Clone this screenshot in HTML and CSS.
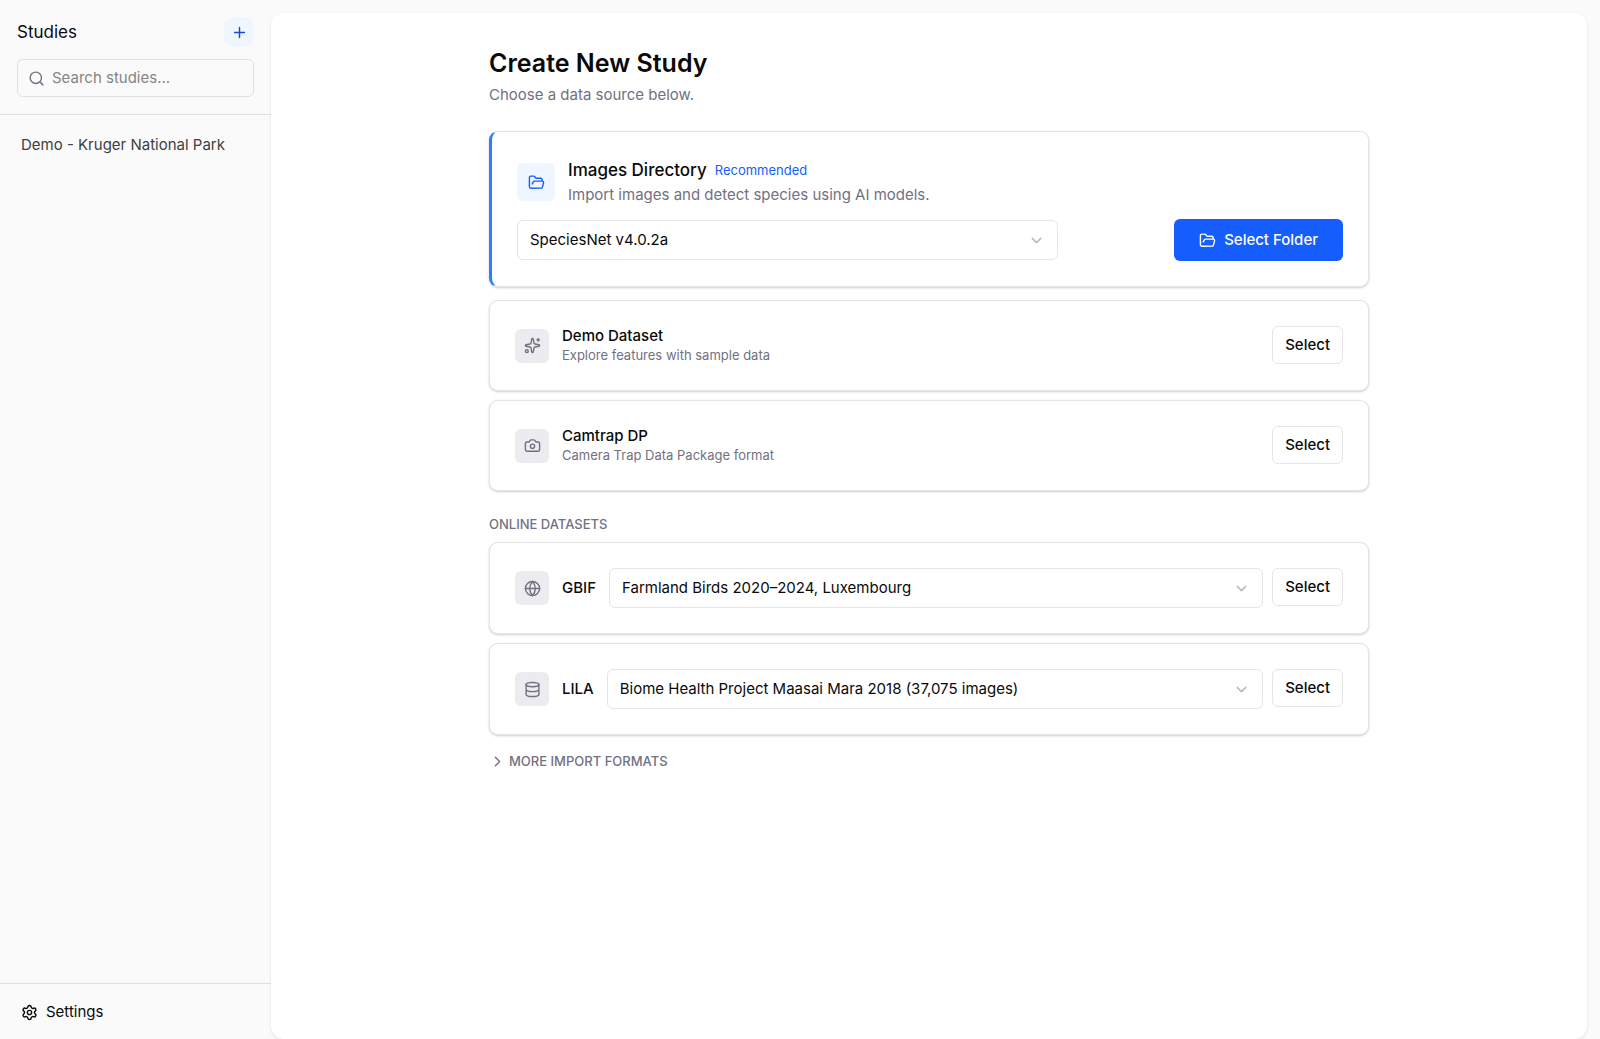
FILE: index.html
```html
<!DOCTYPE html>
<html lang="en">
<head>
    <meta charset="utf-8">
    <title>Create New Study</title>
    <link rel="stylesheet" href="styles.css">
</head>
<body>
    <!-- Shared icons -->
    <svg class="sprite" aria-hidden="true">
        <symbol id="folder-open" viewBox="0 0 24 24">
            <path d="m6 14 1.5-2.9A2 2 0 0 1 9.24 10H20a2 2 0 0 1 1.94 2.5l-1.54 6a2 2 0 0 1-1.95 1.5H4a2 2 0 0 1-2-2V5a2 2 0 0 1 2-2h3.9a2 2 0 0 1 1.69.9l.81 1.2a2 2 0 0 0 1.67.9H18a2 2 0 0 1 2 2v2"/>
        </symbol>
        <symbol id="chevron-down" viewBox="0 0 24 24">
            <path d="m6 9 6 6 6-6"/>
        </symbol>
    </svg>

    <aside class="sidebar">
        <header class="sidebar-header">
            <div class="sidebar-title">
                <a href="#">Studies</a>
                <button class="add-button" aria-label="Add study">
                    <svg class="icon" viewBox="0 0 24 24"><path d="M5 12h14M12 5v14"/></svg>
                </button>
            </div>
            <div class="search">
                <svg class="icon" viewBox="0 0 24 24"><circle cx="11" cy="11" r="8"/><path d="m21 21-4.3-4.3"/></svg>
                <input type="text" placeholder="Search studies..." aria-label="Search studies">
            </div>
        </header>
        <nav class="study-list">
            <a href="#">Demo - Kruger National Park</a>
        </nav>
        <footer class="sidebar-footer">
            <a href="#">
                <svg class="icon" viewBox="0 0 24 24"><path d="M9.671 4.136a2.34 2.34 0 0 1 4.659 0 2.34 2.34 0 0 0 3.319 1.915 2.34 2.34 0 0 1 2.33 4.033 2.34 2.34 0 0 0 0 3.831 2.34 2.34 0 0 1-2.33 4.033 2.34 2.34 0 0 0-3.319 1.915 2.34 2.34 0 0 1-4.659 0 2.34 2.34 0 0 0-3.32-1.915 2.34 2.34 0 0 1-2.33-4.033 2.34 2.34 0 0 0 0-3.831A2.34 2.34 0 0 1 6.35 6.051a2.34 2.34 0 0 0 3.319-1.915"/><circle cx="12" cy="12" r="3"/></svg>
                Settings
            </a>
        </footer>
    </aside>

    <main class="panel">
        <div class="content">
            <h1>Create New Study</h1>
            <p class="subtitle">Choose a data source below.</p>

            <section class="card card-featured">
                <div class="card-head">
                    <span class="icon-box"><svg class="icon"><use href="#folder-open"/></svg></span>
                    <div>
                        <div class="card-title">
                            <h2>Images Directory</h2>
                            <span class="badge">Recommended</span>
                        </div>
                        <p>Import images and detect species using AI models.</p>
                    </div>
                </div>
                <div class="card-actions">
                    <div class="select">
                        <select aria-label="Model">
                            <option>SpeciesNet v4.0.2a</option>
                        </select>
                        <svg class="icon"><use href="#chevron-down"/></svg>
                    </div>
                    <button class="primary-button">
                        <svg class="icon"><use href="#folder-open"/></svg>
                        Select Folder
                    </button>
                </div>
            </section>

            <div class="card-list">
                <section class="card source">
                    <div class="source-info">
                        <span class="icon-box"><svg class="icon" viewBox="0 0 24 24"><path d="M11.017 2.814a1 1 0 0 1 1.966 0l1.051 5.558a2 2 0 0 0 1.594 1.594l5.558 1.051a1 1 0 0 1 0 1.966l-5.558 1.051a2 2 0 0 0-1.594 1.594l-1.051 5.558a1 1 0 0 1-1.966 0l-1.051-5.558a2 2 0 0 0-1.594-1.594l-5.558-1.051a1 1 0 0 1 0-1.966l5.558-1.051a2 2 0 0 0 1.594-1.594z"/><path d="M20 2v4M22 4h-4"/><circle cx="4" cy="20" r="2"/></svg></span>
                        <div>
                            <h3>Demo Dataset</h3>
                            <p>Explore features with sample data</p>
                        </div>
                    </div>
                    <button class="outline-button">Select</button>
                </section>
                <section class="card source">
                    <div class="source-info">
                        <span class="icon-box"><svg class="icon" viewBox="0 0 24 24"><path d="M14.5 4h-5L7 7H4a2 2 0 0 0-2 2v9a2 2 0 0 0 2 2h16a2 2 0 0 0 2-2V9a2 2 0 0 0-2-2h-3z"/><circle cx="12" cy="13" r="3"/></svg></span>
                        <div>
                            <h3>Camtrap DP</h3>
                            <p>Camera Trap Data Package format</p>
                        </div>
                    </div>
                    <button class="outline-button">Select</button>
                </section>
            </div>

            <h4 class="group-label">Online Datasets</h4>
            <div class="card-list">
                <section class="card source">
                    <div class="source-info">
                        <span class="icon-box"><svg class="icon" viewBox="0 0 24 24"><circle cx="12" cy="12" r="10"/><path d="M12 2a14.5 14.5 0 0 0 0 20 14.5 14.5 0 0 0 0-20M2 12h20"/></svg></span>
                        <label for="gbif">GBIF</label>
                        <div class="select">
                            <select id="gbif">
                                <option>Farmland Birds 2020–2024, Luxembourg</option>
                            </select>
                            <svg class="icon"><use href="#chevron-down"/></svg>
                        </div>
                    </div>
                    <button class="outline-button">Select</button>
                </section>
                <section class="card source">
                    <div class="source-info">
                        <span class="icon-box"><svg class="icon" viewBox="0 0 24 24"><ellipse cx="12" cy="5" rx="9" ry="3"/><path d="M3 5v14a9 3 0 0 0 18 0V5M3 12a9 3 0 0 0 18 0"/></svg></span>
                        <label for="lila">LILA</label>
                        <div class="select">
                            <select id="lila">
                                <option>Biome Health Project Maasai Mara 2018 (37,075 images)</option>
                            </select>
                            <svg class="icon"><use href="#chevron-down"/></svg>
                        </div>
                    </div>
                    <button class="outline-button">Select</button>
                </section>
            </div>

            <button class="more-button">
                <svg class="icon" viewBox="0 0 24 24"><path d="m9 18 6-6-6-6"/></svg>
                More import formats
            </button>
        </div>
    </main>
</body>
</html>
```

FILE: styles.css
```css
* {
    box-sizing: border-box;
}
body {
    display: flex;
    min-height: 100vh;
    margin: 0;
    background: #fafafa;
    color: #0a0a0a;
    font-family: Inter, sans-serif;
    font-size: 15px;
    line-height: 20px;
}
h1, h2, h3, h4, p {
    margin: 0;
}
a {
    color: inherit;
    text-decoration: none;
}
button, input, select {
    font: inherit;
    color: inherit;
}
button {
    cursor: pointer;
}
.sprite {
    position: absolute;
    width: 0;
    height: 0;
}
.icon {
    width: 17px;
    height: 17px;
    flex-shrink: 0;
    fill: none;
    stroke: currentColor;
    stroke-width: 2;
    stroke-linecap: round;
    stroke-linejoin: round;
}

/* Sidebar */
.sidebar {
    display: flex;
    flex-direction: column;
    flex: 0 0 271px;
    min-width: 0;
}
.sidebar-header {
    display: flex;
    flex-direction: column;
    gap: 12px;
    padding: 17px;
    border-bottom: 1px solid #e0e0e0;
}
.sidebar-title {
    display: flex;
    align-items: center;
    justify-content: space-between;
    font-size: 17px;
}
.add-button {
    display: flex;
    align-items: center;
    justify-content: center;
    width: 30px;
    height: 30px;
    padding: 0;
    border: none;
    border-radius: 10px;
    background: #eff6ff;
    color: #1447e6;
}
.search {
    display: flex;
    align-items: center;
    gap: 7px;
    height: 38px;
    padding: 0 10px;
    border: 1px solid #e0e0e0;
    border-radius: 6px;
    color: #717182;
}
.search input {
    flex: 1;
    min-width: 0;
    padding: 0;
    border: none;
    outline: none;
    background: none;
    color: #0a0a0a;
}
.search input::placeholder {
    color: #858585;
}
.study-list {
    flex: 1;
    padding: 20px 21px;
    color: #404040;
}
.sidebar-footer {
    padding: 18px 21px 17px;
    border-top: 1px solid #e0e0e0;
}
.sidebar-footer a {
    display: flex;
    align-items: center;
    gap: 8px;
}

/* Main panel */
.panel {
    flex: 1;
    margin: 13px 13px 0 0;
    padding: 34px;
    border-radius: 13px;
    background: #fff;
    box-shadow: 0 1px 3px rgba(0, 0, 0, 0.1);
}
.content {
    max-width: 880px;
    margin: auto;
}
h1 {
    font-size: 25px;
    line-height: 32px;
    font-weight: 600;
}
.subtitle {
    margin: 6px 0 26px;
    color: #717182;
}
.card {
    padding: 25px;
    border: 1px solid #e5e5e5;
    border-radius: 9px;
    background: #fff;
    box-shadow: 0 1px 3px rgba(0, 0, 0, 0.1), 0 1px 2px rgba(0, 0, 0, 0.1);
}
.card-featured {
    margin-bottom: 13px;
    border-left: 3px solid #2b7fff;
}
.card-head {
    display: flex;
    align-items: center;
    gap: 13px;
    margin-bottom: 12px;
}
.card-head p {
    line-height: 24px;
    color: #717182;
}
.card-title {
    display: flex;
    align-items: center;
    gap: 8px;
}
.card-title h2 {
    font-size: 17px;
    line-height: 26px;
    font-weight: 500;
}
.badge {
    font-size: 13px;
    color: #155dfc;
}
.icon-box {
    display: flex;
    align-items: center;
    justify-content: center;
    flex-shrink: 0;
    width: 34px;
    height: 34px;
    border-radius: 6px;
    background: #ececf0;
    color: #717182;
}
.card-head .icon-box {
    width: 38px;
    height: 38px;
    background: #eff6ff;
    color: #155dfc;
}
.card-actions {
    display: flex;
    align-items: center;
    justify-content: space-between;
    gap: 12px;
}
.card-actions .select {
    max-width: 541px;
}
.select {
    position: relative;
    flex: 1;
    min-width: 0;
}
.select select {
    display: block;
    width: 100%;
    height: 40px;
    padding: 0 40px 0 12px;
    border: 1px solid #e5e5e5;
    border-radius: 6px;
    background: #fff;
    appearance: none;
}
/* Chevron drawn over the select */
.select .icon {
    position: absolute;
    top: 12px;
    right: 13px;
    color: #b8b8c0;
    pointer-events: none;
}
.primary-button {
    display: flex;
    align-items: center;
    gap: 8px;
    height: 42px;
    padding: 0 25px;
    border: none;
    border-radius: 6px;
    background: #155dfc;
    color: #fff;
    font-weight: 500;
}
.outline-button {
    height: 38px;
    padding: 0 12px;
    border: 1px solid #e5e5e5;
    border-radius: 6px;
    background: #fff;
    font-weight: 500;
}
.card-list {
    display: flex;
    flex-direction: column;
    gap: 9px;
}
.source {
    display: flex;
    align-items: flex-start;
    justify-content: space-between;
    gap: 9px;
}
.source-info {
    display: flex;
    align-items: center;
    flex: 1;
    gap: 13px;
    min-width: 0;
}
.source-info h3, .source-info label {
    font-size: 15px;
    line-height: 20px;
    font-weight: 500;
}
.source-info p {
    font-size: 13px;
    line-height: 19px;
    color: #717182;
}
.group-label, .more-button {
    font-size: 13px;
    font-weight: 500;
    text-transform: uppercase;
    color: #717182;
}
.group-label {
    margin: 23px 0 8px;
}
.more-button {
    display: flex;
    align-items: center;
    gap: 3px;
    margin-top: 16px;
    padding: 0;
    border: none;
    background: none;
}
```
